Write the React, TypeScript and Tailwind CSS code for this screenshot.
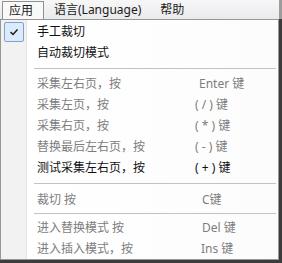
import React from "react";

type Row =
  | { kind: "item"; label: string; key?: string; keyX?: number; enabled?: boolean; checked?: boolean }
  | { kind: "sep"; h: number };

const rows: Row[] = [
  { kind: "item", label: "手工裁切", enabled: true, checked: true },
  { kind: "item", label: "自动裁切模式", enabled: true },
  { kind: "sep", h: 10 },
  { kind: "item", label: "采集左右页，按", key: "Enter 键", keyX: 199 },
  { kind: "item", label: "采集左页，按", key: "( / ) 键", keyX: 195 },
  { kind: "item", label: "采集右页，按", key: "( * ) 键", keyX: 195 },
  { kind: "item", label: "替换最后左右页，按", key: "( - ) 键", keyX: 195 },
  { kind: "item", label: "测试采集左右页，按", key: "( + ) 键", keyX: 195, enabled: true },
  { kind: "sep", h: 11 },
  { kind: "item", label: "裁切 按", key: "C键", keyX: 202 },
  { kind: "sep", h: 7 },
  { kind: "item", label: "进入替换模式 按", key: "Del 键", keyX: 202 },
  { kind: "item", label: "进入插入模式，按", key: "Ins 键", keyX: 201 },
];

export default function App() {
  return (
    <div className="w-[282px] h-[263px] bg-[#3c3c3c] overflow-hidden font-['Noto_Sans','Noto_Sans_CJK_SC',sans-serif] text-[12px] leading-none select-none">
      {/* menubar */}
      <div className="flex h-[19px]">
        <div className="w-[279px] h-[19px] bg-linear-to-b from-[#f7f7f8] to-[#e9eaec] flex items-end pl-[2px] text-[#1a1a1a]">
          <div className="h-[18px] w-[42px] border border-b-0 border-[#8f9194] bg-[#f9f9f9] flex items-center pl-[6px]">
            应用
          </div>
          <div className="h-[18px] flex items-center pl-[10px]">语言(Language)</div>
          <div className="h-[18px] flex items-center pl-[19px]">帮助</div>
        </div>
        <div className="w-[3px] h-[19px] bg-[#9c9c9c]" />
      </div>

      {/* dropdown */}
      <div className="w-[279px] h-[241px] border border-[#979797] bg-[linear-gradient(to_right,#f2f2f2_0,#f2f2f2_25px,#e3e4e4_25px,#e3e4e4_26px,#ffffff_26px,#fcfcfc_100%)]">
        <div className="pt-[1px]">
          {rows.map((r, i) =>
            r.kind === "sep" ? (
              <div key={i} className="flex items-center pl-[33px] pr-[2px]" style={{ height: r.h }}>
                <div className="h-px w-full bg-[#c3c3c3]" />
              </div>
            ) : (
              <div
                key={i}
                className={`flex items-center h-[21px] ${r.enabled ? "text-[#111111]" : "text-[#7d7d7d]"}`}
              >
                <div className="w-[36px] h-[21px] flex items-center">
                  {r.checked && (
                    <div className="ml-[3px] mt-[1px] w-[20px] h-[20px] border border-[#7da2ce] rounded-[2px] bg-[#dcebfc] flex items-center justify-center">
                      <svg width="12" height="12" viewBox="0 0 12 12">
                        <path d="M2.5 6 L5 8.5 L9.5 3.5" fill="none" stroke="#1c1c1c" strokeWidth="1.5" />
                      </svg>
                    </div>
                  )}
                </div>
                <div className="w-[158px] whitespace-nowrap">{r.label}</div>
                {r.key && (
                  <div className="whitespace-nowrap" style={{ paddingLeft: (r.keyX ?? 195) - 195 }}>
                    {r.key}
                  </div>
                )}
              </div>
            )
          )}
        </div>
      </div>
    </div>
  );
}
